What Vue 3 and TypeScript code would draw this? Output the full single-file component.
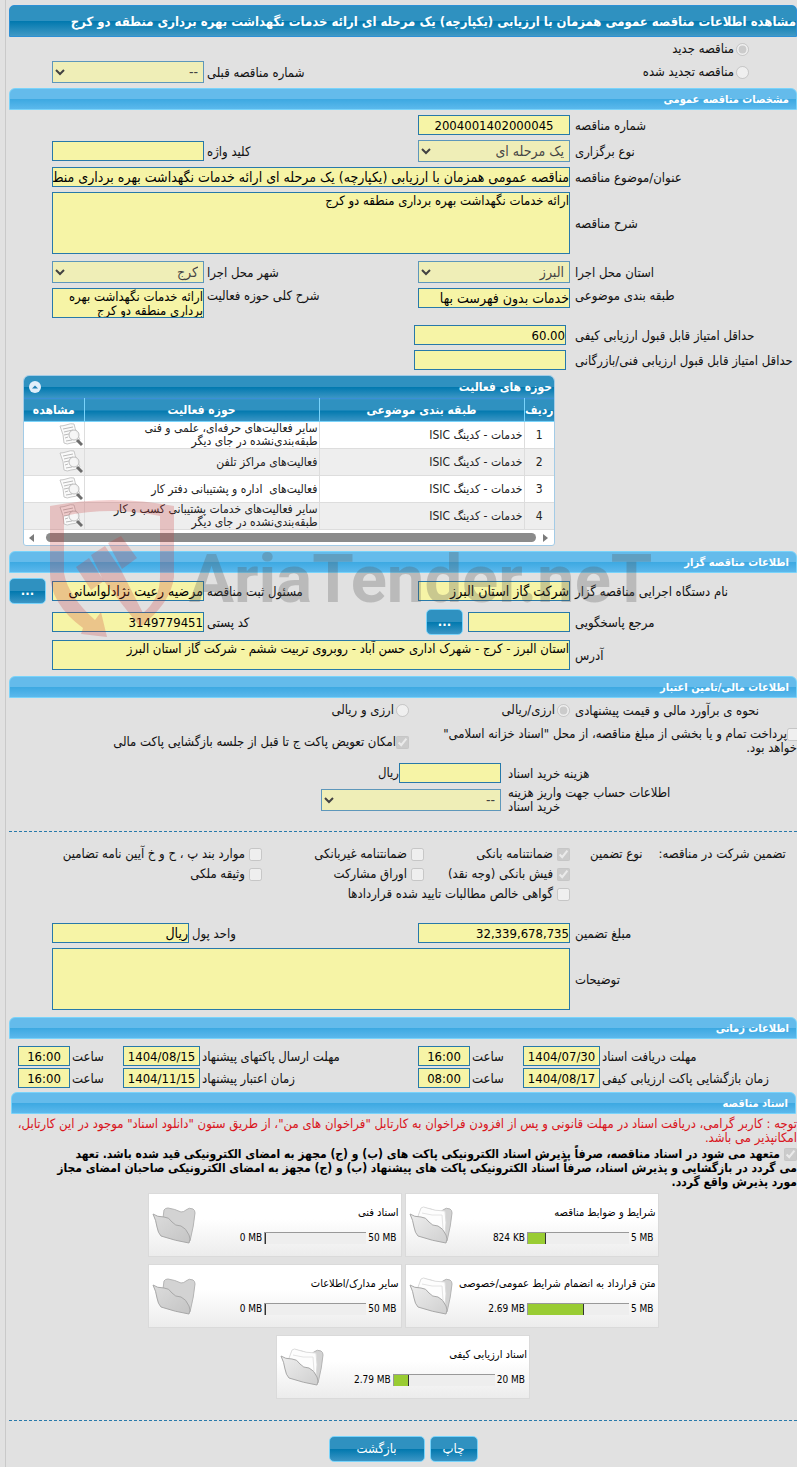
<script setup lang="ts">
interface Activity { id: number; category: string; field: string[] }
interface Doc { title: string; used: string; total: string; percent: number; filled: boolean }
interface Guarantee { id: string; label: string; checked: boolean; wide?: boolean }
interface Deadline { id: string; label: string; date: string; time: string }

const activities: Activity[] = [
  { id: 1, category: 'خدمات - کدینگ ISIC', field: ['سایر فعالیت‌های حرفه‌ای، علمی و فنی', 'طبقه‌بندی‌نشده در جای دیگر'] },
  { id: 2, category: 'خدمات - کدینگ ISIC', field: ['فعالیت‌های مراکز تلفن'] },
  { id: 3, category: 'خدمات - کدینگ ISIC', field: ['فعالیت‌های  اداره و پشتیبانی دفتر کار'] },
  { id: 4, category: 'خدمات - کدینگ ISIC', field: ['سایر فعالیت‌های خدمات پشتیبانی کسب و کار', 'طبقه‌بندی‌نشده در جای دیگر'] },
]

const guarantees: Guarantee[] = [
  { id: 'g1', label: 'ضمانتنامه بانکی', checked: true },
  { id: 'g2', label: 'ضمانتنامه غیربانکی', checked: false },
  { id: 'g3', label: 'موارد بند پ ، ح و خ آیین نامه تضامین', checked: false },
  { id: 'g4', label: 'فیش بانکی (وجه نقد)', checked: true },
  { id: 'g5', label: 'اوراق مشارکت', checked: false },
  { id: 'g6', label: 'وثیقه ملکی', checked: false },
  { id: 'g7', label: 'گواهی خالص مطالبات تایید شده قراردادها', checked: false, wide: true },
]

const deadlines: Deadline[][] = [
  [
    { id: 'd1', label: 'مهلت دریافت اسناد', date: '1404/07/30', time: '16:00' },
    { id: 'd2', label: 'مهلت ارسال پاکتهای پیشنهاد', date: '1404/08/15', time: '16:00' },
  ],
  [
    { id: 'd3', label: 'زمان بازگشایی پاکت ارزیابی کیفی', date: '1404/08/17', time: '08:00' },
    { id: 'd4', label: 'زمان اعتبار پیشنهاد', date: '1404/11/15', time: '16:00' },
  ],
]

const docs: Doc[] = [
  { title: 'شرایط و ضوابط مناقصه', used: '824 KB', total: '5 MB', percent: 18, filled: true },
  { title: 'اسناد فنی', used: '0 MB', total: '50 MB', percent: 1, filled: false },
  { title: 'متن قرارداد به انضمام شرایط عمومی/خصوصی', used: '2.69 MB', total: '5 MB', percent: 55, filled: true },
  { title: 'سایر مدارک/اطلاعات', used: '0 MB', total: '50 MB', percent: 1, filled: false },
  { title: 'اسناد ارزیابی کیفی', used: '2.79 MB', total: '20 MB', percent: 15, filled: true },
]
</script>

<template>
  <main class="page" dir="rtl">
    <h1 class="title">مشاهده اطلاعات مناقصه عمومی همزمان با ارزیابی (یکپارچه) یک مرحله ای ارائه خدمات نگهداشت بهره برداری منطقه دو کرج</h1>

    <div class="kind">
      <div class="kind-row">
        <span class="pick"><input id="k1" type="radio" name="kind" checked disabled><label for="k1">مناقصه جدید</label></span>
      </div>
      <div class="kind-row">
        <span class="pick"><input id="k2" type="radio" name="kind" disabled><label for="k2">مناقصه تجدید شده</label></span>
        <label class="lb lb2" for="prev">شماره مناقصه قبلی</label>
        <select id="prev" disabled><option>--</option></select>
      </div>
    </div>

    <h2 class="bar">مشخصات مناقصه عمومی</h2>
    <section class="rows">
      <div class="row">
        <label class="lb" for="num">شماره مناقصه</label>
        <input id="num" class="center" type="text" value="2004001402000045" readonly>
      </div>
      <div class="row">
        <label class="lb" for="type">نوع برگزاری</label>
        <select id="type" disabled><option>یک مرحله ای</option></select>
        <label class="lb lb2" for="key">کلید واژه</label>
        <input id="key" type="text" readonly>
      </div>
      <div class="row">
        <label class="lb" for="subj">عنوان/موضوع مناقصه</label>
        <input id="subj" class="fa span3" type="text" value="مناقصه عمومی همزمان با ارزیابی (یکپارچه) یک مرحله ای ارائه خدمات نگهداشت بهره برداری منطقه دو کرج" readonly>
      </div>
      <div class="row">
        <label class="lb" for="desc">شرح مناقصه</label>
        <textarea id="desc" class="span3 tall" readonly>ارائه خدمات نگهداشت بهره برداری منطقه دو کرج</textarea>
      </div>
      <div class="row spaced">
        <label class="lb" for="prov">استان محل اجرا</label>
        <select id="prov" disabled><option>البرز</option></select>
        <label class="lb lb2" for="city">شهر محل اجرا</label>
        <select id="city" disabled><option>کرج</option></select>
      </div>
      <div class="row top">
        <label class="lb" for="topic">طبقه بندی موضوعی</label>
        <input id="topic" class="fa" type="text" value="خدمات بدون فهرست بها" readonly>
        <label class="lb lb2" for="area">شرح کلی حوزه فعالیت</label>
        <textarea id="area" class="short" readonly>ارائه خدمات نگهداشت بهره برداری منطقه دو کرج</textarea>
      </div>
      <div class="row score spaced">
        <label class="lb" for="s1">حداقل امتیاز قابل قبول ارزیابی کیفی</label>
        <input id="s1" type="text" value="60.00" readonly>
      </div>
      <div class="row score">
        <label class="lb" for="s2">حداقل امتیاز قابل قبول ارزیابی فنی/بازرگانی</label>
        <input id="s2" type="text" readonly>
      </div>
    </section>

    <section class="panel">
      <header class="panel-head">
        <h3>حوزه های فعالیت</h3>
        <button class="fold" type="button" aria-label="جمع کردن">
          <svg viewBox="0 0 12 12" width="12" height="12"><circle cx="6" cy="6" r="6" fill="#e2eefa" /><path d="M3 7.500L6 4.500L9 7.500Z" fill="#1f7fb4" /></svg>
        </button>
      </header>
      <table class="grid">
        <thead>
          <tr><th class="c-no">ردیف</th><th class="c-cat">طبقه بندی موضوعی</th><th class="c-field">حوزه فعالیت</th><th>مشاهده</th></tr>
        </thead>
        <tbody>
          <tr v-for="a in activities" :key="a.id">
            <td class="no">{{ a.id }}</td>
            <td>{{ a.category }}</td>
            <td class="pre"><div v-for="line in a.field" :key="line">{{ line }}</div></td>
            <td class="view">
              <button class="look" type="button" aria-label="مشاهده">
                <svg viewBox="0 0 24 24" width="24" height="24">
                  <path d="M1 3Q4 3 7 2Q12 0 15 1Q16 6 18 10L21 17Q17 20 12 20Q8 22 5 20Q5 12 1 3Z" fill="#fafafa" stroke="#c6c6c6" />
                  <path d="M4 6Q9 5 14 4M5 9Q9 8 14 7M5 12L10 11M6 15L9 14M7 18L13 17" stroke="#bbb" fill="none" />
                  <circle cx="15" cy="12" r="5" fill="#f4f4f4" fill-opacity=".85" stroke="#bdbdbd" />
                  <path d="M18 17L23 22" stroke="#6d6d6d" stroke-width="3" />
                </svg>
              </button>
            </td>
          </tr>
        </tbody>
      </table>
      <div class="scroll" aria-hidden="true">
        <i class="arrow right"></i><i class="thumb"></i><i class="arrow left"></i>
      </div>
    </section>

    <div class="brand-anchor">
      <h2 class="bar">اطلاعات مناقصه گزار</h2>
      <svg class="brand" viewBox="0 0 602 142" width="602" height="142" aria-hidden="true">
        <g fill="#c83232" fill-opacity=".24">
          <path fill-rule="evenodd" d="M1 7Q32 1 63 1Q94 1 125 7V78Q122 104 91 128L54 81L42 56L56 47L72 71L94 114Q111 100 111 78V17Q86 12 63 12Q38 12 15 17V74Q19 97 46 121L52 113L58 138L32 135L34 129Q1 105 1 74Z" />
          <path d="M27 68L40 59L55 82L42 91ZM59 44L72 37L88 59L73 70Z" />
        </g>
        <text x="140" y="103" fill="#555" fill-opacity=".28" direction="ltr" text-anchor="start">AriaTender.neT</text>
      </svg>
    </div>
    <section class="rows">
      <div class="row">
        <label class="lb" for="org">نام دستگاه اجرایی مناقصه گزار</label>
        <input id="org" class="fa" type="text" value="شرکت گاز استان البرز" readonly>
        <label class="lb lb2" for="resp">مسئول ثبت مناقصه</label>
        <input id="resp" class="fa" type="text" value="مرضیه رعیت نژادلواسانی" readonly>
        <span class="tail"><button class="btn dots" type="button">...</button></span>
      </div>
      <div class="row">
        <label class="lb" for="ref">مرجع پاسخگویی</label>
        <span class="combo"><input id="ref" type="text" readonly><button class="btn dots" type="button">...</button></span>
        <label class="lb lb2" for="post">کد پستی</label>
        <input id="post" type="text" value="3149779451" readonly>
      </div>
      <div class="row">
        <label class="lb" for="addr">آدرس</label>
        <textarea id="addr" class="span3 short" readonly>استان البرز - کرج - شهرک اداری حسن آباد - روبروی تربیت ششم - شرکت گاز استان البرز</textarea>
      </div>
    </section>

    <h2 class="bar bar-fin">اطلاعات مالی/تامین اعتبار</h2>
    <section class="finance">
      <div class="money-kind">
        <span class="lb">نحوه ی برآورد مالی و قیمت پیشنهادی</span>
        <span class="pick"><input id="m1" type="radio" name="money" checked disabled><label for="m1">ارزی/ریالی</label></span>
        <span class="pick"><input id="m2" type="radio" name="money" disabled><label for="m2">ارزی و ریالی</label></span>
      </div>
      <div class="options">
        <div class="treasury"><input id="o1" type="checkbox" disabled><label for="o1">پرداخت تمام و یا بخشی از مبلغ مناقصه، از محل "اسناد خزانه اسلامی"<br>خواهد بود.</label></div>
        <span class="pick tight"><input id="o2" type="checkbox" checked disabled><label for="o2">امکان تعویض پاکت ج تا قبل از جلسه بازگشایی پاکت مالی</label></span>
      </div>
      <div class="fee">
        <label class="lb" for="fee">هزینه خرید اسناد</label>
        <span class="fee-field"><input id="fee" type="text" readonly>ریال</span>
      </div>
      <div class="fee">
        <label class="lb" for="acc">اطلاعات حساب جهت واریز هزینه<br>خرید اسناد</label>
        <select id="acc" disabled><option>--</option></select>
      </div>
    </section>

    <hr class="dash">
    <section class="guarantee">
      <div class="heads"><span>تضمین شرکت در مناقصه:</span><span>نوع تضمین</span></div>
      <span v-for="g in guarantees" :key="g.id" class="pick" :class="{ wide: g.wide, first: g.id === 'g4' || g.wide }">
        <input :id="g.id" type="checkbox" :checked="g.checked" disabled><label :for="g.id">{{ g.label }}</label>
      </span>
    </section>

    <section class="rows amount">
      <div class="row">
        <label class="lb" for="amt">مبلغ تضمین</label>
        <input id="amt" type="text" value="32,339,678,735" readonly>
        <label class="lb lb2" for="cur">واحد پول</label>
        <input id="cur" class="fa" type="text" value="ریال" readonly>
      </div>
      <div class="row">
        <label class="lb" for="note">توضیحات</label>
        <textarea id="note" class="span3 tall" readonly></textarea>
      </div>
    </section>

    <h2 class="bar bar-time">اطلاعات زمانی</h2>
    <section class="times">
      <div v-for="(pair, i) in deadlines" :key="i" class="time-row">
        <template v-for="d in pair" :key="d.id">
          <label :for="d.id">{{ d.label }}</label>
          <input :id="d.id" class="center" type="text" :value="d.date" readonly>
          <label :for="d.id + 't'">ساعت</label>
          <input :id="d.id + 't'" class="center" type="text" :value="d.time" readonly>
        </template>
      </div>
    </section>

    <h2 class="bar bar-docs">اسناد مناقصه</h2>
    <p class="warn">توجه : کاربر گرامی، دریافت اسناد در مهلت قانونی و پس از افزودن فراخوان به کارتابل "فراخوان های من"، از طریق ستون "دانلود اسناد" موجود در این کارتابل،<br>امکانپذیر می باشد.</p>
    <div class="pledge">
      <input id="pledge" type="checkbox" checked disabled>
      <label for="pledge">متعهد می شود در اسناد مناقصه، صرفاً پذیرش اسناد الکترونیکی پاکت های (ب) و (ج) مجهز به امضای الکترونیکی قید شده باشد. تعهد<br>می گردد در بازگشایی و پذیرش اسناد، صرفاً اسناد الکترونیکی پاکت های پیشنهاد (ب) و (ج) مجهز به امضای الکترونیکی صاحبان امضای مجاز<br>مورد پذیرش واقع گردد.</label>
    </div>

    <section class="cards">
      <article v-for="d in docs" :key="d.title" class="card">
        <h4>{{ d.title }}</h4>
        <div class="meter">
          <span>{{ d.used }}</span>
          <div class="track" role="progressbar" :aria-label="d.title" :aria-valuenow="d.percent"><div class="fill" :style="{ width: d.percent + '%' }"></div></div>
          <span>{{ d.total }}</span>
        </div>
        <svg class="folder" viewBox="0 0 44 40" width="44" height="40" aria-hidden="true">
          <defs>
            <linearGradient id="front" x1="0" y1="0" x2="1" y2="1"><stop offset="0" stop-color="#eee" /><stop offset="1" stop-color="#cfcfcf" /></linearGradient>
            <linearGradient id="front-dark" x1="0" y1="0" x2="1" y2="1"><stop offset="0" stop-color="#dcdcdc" /><stop offset="1" stop-color="#c4c4c4" /></linearGradient>
          </defs>
          <path d="M11 13L12 5Q13 3 16 3Q23 4 29 7Q32 7 34 5Q37 2 41 4Q43 5 43 8Q42 20 38 36L30 34L11 22Z" fill="#d3d3d3" stroke="#b5b5b5" />
          <template v-if="d.filled">
            <path d="M8 14L12 3Q14 1 18 3Q26 6 36 6Q38 18 36 29L28 24Z" fill="#fdfdfd" stroke="#dcdcdc" />
            <path d="M13 8Q23 11 33 10L34 24" stroke="#e4e4e4" fill="none" />
          </template>
          <path d="M1 9Q5 12 12 12Q17 12 20 17Q23 21 29 21Q34 23 37 30Q39 34 37 38Q24 36 9 31Q6 28 5 22Q4 15 1 9Z" :fill="d.filled ? 'url(#front)' : 'url(#front-dark)'" stroke="#a8a8a8" />
        </svg>
      </article>
    </section>

    <hr class="dash dash-end">
    <footer class="actions">
      <button class="btn print" type="button">چاپ</button>
      <button class="btn back" type="button">بازگشت</button>
    </footer>
  </main>
</template>

<style>
body { background: #e1e1e1; }
</style>

<style scoped>
.page {
  box-sizing: border-box;
  min-height: 100vh;
  margin-left: 5px;
  padding: 5px 0 4px 3px;
  border-left: 1px solid #c9c9c9;
  overflow: hidden;
  color: #111;
  font: 13px/14px "DejaVu Sans Condensed", "DejaVu Sans", sans-serif;
}
.page * { box-sizing: border-box; }
h1, h2, h3, h4, p { margin: 0; }

.title {
  height: 32px;
  border: 1px solid #2d90d5;
  border-radius: 5px 5px 0 0;
  background: linear-gradient(#2f91c0 50%, #0078ae 50%, #4199c5);
  color: #fff;
  font-size: 13px;
  line-height: 31px;
  white-space: nowrap;
}
.bar {
  height: 22px;
  padding-right: 7px;
  border: 1px solid #79d3fa;
  border-radius: 6px 6px 0 0;
  background: linear-gradient(#64bbeb 48%, #3ba8e1 48%, #5bb8ec);
  color: #fff;
  font-size: 11px;
  line-height: 22px;
}

input[type="text"], textarea, select {
  width: 100%;
  margin: 0;
  border: 1px solid #2779aa;
  border-radius: 0;
  background: #f6f4a6;
  color: #000;
  outline: none;
}
input[type="text"] {
  height: 20px;
  padding: 0;
  font: 13px/18px "DejaVu Sans Condensed", "DejaVu Sans", sans-serif;
}
input[type="text"].fa { font-size: 14px; }
input[type="text"].center { text-align: center; }
textarea {
  display: block;
  padding: 1px 0;
  resize: none;
  overflow: hidden;
  font: 13px/14px "DejaVu Sans Condensed", "DejaVu Sans", sans-serif;
}
select {
  height: 22px;
  padding: 0 1px;
  font: 14px/20px "DejaVu Sans Condensed", "DejaVu Sans", sans-serif;
  opacity: .7;
}
input[type="radio"], input[type="checkbox"] { flex: none; width: 13px; height: 13px; margin: 0; }
.tall { height: 62px; }
.short { height: 30px; }

.rows { display: flex; flex-direction: column; gap: 5px; padding-top: 5px; }
.row {
  display: grid;
  grid-template-columns: minmax(0, 1fr) 152px 214px 152px 43px;
  align-items: center;
}
.row.top { align-items: start; }
.spaced { margin-top: 2px; }
.span3 { grid-column: span 3; }
.lb { padding-top: 1px; padding-left: 5px; text-align: left; white-space: nowrap; }
.lb2 { padding-left: 3px; }
.row.score { grid-template-columns: minmax(0, 1fr) 152px 405px; }
.row.score .lb { padding-left: 9px; }
.pick { display: flex; align-items: center; gap: 3px; white-space: nowrap; }

.kind { display: flex; flex-direction: column; gap: 1px; padding: 1px 0 5px; }
.kind-row {
  display: grid;
  grid-template-columns: minmax(0, 1fr) 214px 152px 43px;
  align-items: center;
  min-height: 22px;
}
.kind-row .pick { padding-right: 48px; gap: 2px; }

.panel {
  margin: 5px 242px 0 14px;
  border: 1px solid #a3cbe6;
  border-radius: 6px 6px 3px 3px;
  background: #fff;
  overflow: hidden;
}
.panel-head {
  display: flex;
  align-items: center;
  justify-content: space-between;
  height: 22px;
  padding: 0 2px 0 5px;
  background: linear-gradient(#2f91c0 50%, #0078ae 50%, #3c96c5);
}
.panel-head h3 { color: #fff; font-size: 12px; }
.fold, .look { display: block; padding: 0; border: 0; background: none; }
.fold svg, .look svg { display: block; }
.grid { width: 100%; border-collapse: collapse; table-layout: fixed; font-size: 12px; line-height: 13px; color: #222; }
.grid th {
  height: 23px;
  padding: 0;
  border-top: 1px solid #3a8fd8;
  border-bottom: 1px solid #79d3fa;
  border-left: 1px solid #79d3fa;
  background: linear-gradient(#2f91c0 50%, #0078ae 50%, #3c96c5);
  color: #fff;
}
.grid th:last-child, .grid td:last-child { border-left: 0; }
.c-no { width: 30px; }
.c-cat { width: 205px; }
.c-field { width: 235px; }
.grid td { height: 27px; padding: 0 1px; border-bottom: 1px solid #ddd; border-left: 1px solid #ddd; }
.grid tbody tr:nth-child(even) { background: #eee; }
.grid td.no { text-align: center; }
.pre { white-space: pre; }
.scroll { display: flex; align-items: center; gap: 7px; height: 15px; padding: 0 6px 0 5px; }
.thumb { flex: 1; height: 9px; margin-left: 5px; border-radius: 5px; background: #8b8b8b; }
.arrow { border: 4px solid transparent; }
.arrow.right { border-right-width: 0; border-left: 5px solid #7b7b7b; }
.arrow.left { border-left-width: 0; border-right: 5px solid #7b7b7b; }

.brand-anchor { position: relative; margin-top: 5px; }
.brand { position: absolute; top: -52px; left: 40px; pointer-events: none; z-index: 1; }
.brand text { font: bold 67px Roboto, sans-serif; }

.btn {
  height: 26px;
  padding: 0;
  border: 1px solid #79d3fa;
  border-radius: 5px;
  background: linear-gradient(#2f91c0 50%, #0078ae 50%, #3c96c5);
  color: #fff;
  font: 13px/20px "DejaVu Sans Condensed", "DejaVu Sans", sans-serif;
}
.dots { flex: none; width: 37px; font-weight: bold; }
.tail { display: flex; justify-content: flex-end; height: 26px; }
.combo { display: flex; align-items: center; gap: 5px; }
.combo input[type="text"] { flex: none; width: 102px; }

.bar-fin { margin-top: 6px; }
.finance { padding-top: 3px; }
.money-kind { display: grid; grid-template-columns: minmax(0, 1fr) 161px 400px; height: 18px; align-items: center; }
.money-kind .pick { gap: 2px; }
.options { display: grid; grid-template-columns: minmax(0, 1fr) 400px; margin-top: 8px; align-items: center; }
.treasury { white-space: nowrap; height: 30px; }
.treasury input { margin-right: -3px; vertical-align: bottom; }
.pick.tight { gap: 0; }
.fee { display: grid; grid-template-columns: minmax(0, 1fr) 492px; align-items: center; margin-top: 6px; }
.fee + .fee { margin-top: 2px; }
.fee .lb { padding-left: 7px; }
.fee select { width: 180px; }
.fee-field { display: flex; align-items: center; }
.fee-field input[type="text"] { width: 102px; }

.dash { height: 0; margin: 17px 0 0; border: 0; border-top: 1px dashed #2779aa; }
.guarantee {
  display: grid;
  grid-template-columns: minmax(0, 1fr) 146px 162px 253px;
  grid-auto-rows: 20px;
  align-items: center;
  padding-top: 12px;
}
.heads { display: flex; justify-content: flex-end; gap: 16px; padding-left: 20px; white-space: nowrap; }
.guarantee .first { grid-column-start: 2; }
.guarantee .wide { grid-column-end: span 2; }
.guarantee .pick { gap: 4px; }
.amount { padding-top: 19px; }
.amount .row:first-child { grid-template-columns: minmax(0, 1fr) 152px 229px 137px 43px; }

.bar-time { margin-top: 7px; }
.times { display: flex; flex-direction: column; gap: 2px; padding: 7px 0 4px; }
.time-row {
  display: grid;
  grid-template-columns: minmax(0, 1fr) 77px 53px 52px 218px 77px 53px 52px 9px;
  align-items: center;
}
.time-row label { padding-top: 1px; padding-left: 2px; text-align: left; white-space: nowrap; }

.bar-docs { margin: 0 1px 0 2px; }
.warn { padding-top: 3px; color: #d9141c; white-space: nowrap; }
.pledge { padding-top: 2px; color: #000; font-size: 12px; font-weight: bold; white-space: nowrap; }
.pledge input { margin-left: 4px; vertical-align: bottom; }

.cards { display: flex; flex-wrap: wrap; justify-content: center; gap: 7px 3px; max-width: 520px; margin: 4px auto 0; }
.card {
  display: grid;
  grid-template-columns: 1fr 50px;
  grid-template-rows: 20px 20px;
  align-content: center;
  align-items: center;
  row-gap: 5px;
  width: 254px;
  height: 64px;
  border: 1px solid #dadada;
  background: linear-gradient(#fff 40%, #ececec);
}
.card h4 { grid-column: 1; padding-right: 2px; color: #000; font-size: 11px; line-height: 12px; font-weight: normal; white-space: nowrap; }
.meter { grid-column: 1; grid-row: 2; direction: ltr; display: flex; align-items: center; justify-content: flex-end; gap: 2px; padding-right: 4px; color: #000; font-size: 10px; }
.folder { grid-column: 2; grid-row: 1 / span 2; justify-self: center; }
.track { width: 102px; height: 12px; border: solid #999; border-width: 1px 0 0 1px; background: #eee; }
.fill { height: 100%; border-right: 1px solid #333; background: #9c3; }

.dash-end { margin-top: 21px; }
.actions { display: flex; justify-content: center; gap: 5px; padding-top: 15px; }
.print { width: 48px; }
.back { width: 96px; }
</style>
